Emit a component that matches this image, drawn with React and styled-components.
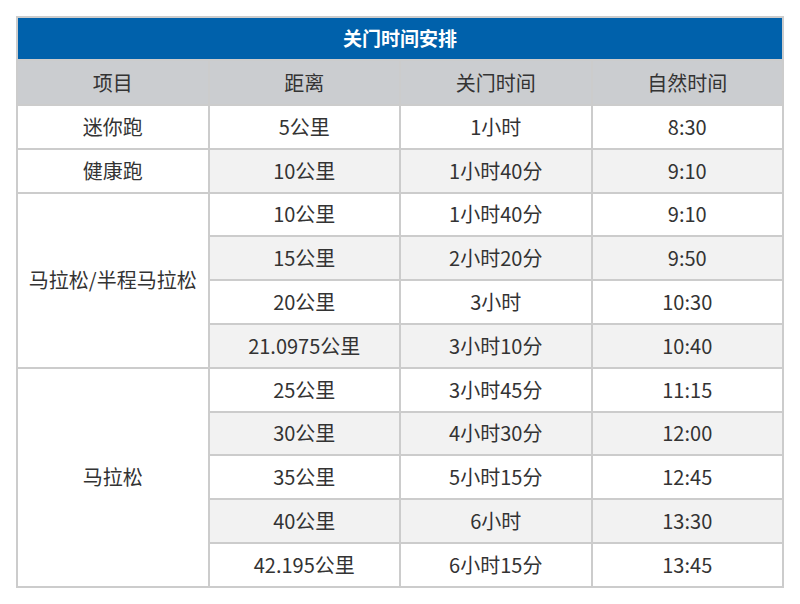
import React from 'react';
import styled, { createGlobalStyle } from 'styled-components';

const GlobalStyle = createGlobalStyle`
  html, body {
    margin: 0;
    padding: 0;
    background: #ffffff;
  }
  body {
    font-family: "Noto Sans CJK SC", "Liberation Sans", sans-serif;
    color: #333333;
  }
`;

const Page = styled.div`
  width: 800px;
  height: 604px;
  padding: 16px;
  box-sizing: border-box;
`;

const Table = styled.table`
  width: 768px;
  border-collapse: collapse;
  table-layout: fixed;
  border: 2px solid #cccccc;
  font-size: 20px;
  line-height: 1.2;
`;

const Title = styled.th`
  background: #0061ab;
  color: #ffffff;
  font-weight: 700;
  font-size: 19px;
  height: 41px;
  padding: 0;
  text-align: center;
  border: 2px solid #cccccc;
  border-bottom: none;
`;

const HeadCell = styled.th`
  background: #cbcdd0;
  color: #333333;
  font-weight: 400;
  height: 43px;
  padding: 0;
  text-align: center;
  border: 2px solid #cccccc;
`;

const Row = styled.tr`
  background: ${({ $striped }) => ($striped ? '#f2f2f2' : '#ffffff')};
`;

const Cell = styled.td`
  height: 41.8px;
  padding: 0;
  text-align: center;
  vertical-align: middle;
  border: 2px solid #cccccc;
  background: ${({ $plain }) => ($plain ? '#ffffff' : 'inherit')};
`;

const rows = [
  { event: '迷你跑', span: 1, dist: '5公里', close: '1小时', time: '8:30' },
  { event: '健康跑', span: 1, dist: '10公里', close: '1小时40分', time: '9:10' },
  { event: '马拉松/半程马拉松', span: 4, dist: '10公里', close: '1小时40分', time: '9:10' },
  { dist: '15公里', close: '2小时20分', time: '9:50' },
  { dist: '20公里', close: '3小时', time: '10:30' },
  { dist: '21.0975公里', close: '3小时10分', time: '10:40' },
  { event: '马拉松', span: 5, dist: '25公里', close: '3小时45分', time: '11:15' },
  { dist: '30公里', close: '4小时30分', time: '12:00' },
  { dist: '35公里', close: '5小时15分', time: '12:45' },
  { dist: '40公里', close: '6小时', time: '13:30' },
  { dist: '42.195公里', close: '6小时15分', time: '13:45' },
];

export default function App() {
  return (
    <Page>
      <GlobalStyle />
      <Table>
        <thead>
          <tr>
            <Title colSpan={4}>关门时间安排</Title>
          </tr>
          <tr>
            <HeadCell>项目</HeadCell>
            <HeadCell>距离</HeadCell>
            <HeadCell>关门时间</HeadCell>
            <HeadCell>自然时间</HeadCell>
          </tr>
        </thead>
        <tbody>
          {rows.map((r, i) => (
            <Row key={i} $striped={i % 2 === 1}>
              {r.event && (
                <Cell $plain rowSpan={r.span}>
                  {r.event}
                </Cell>
              )}
              <Cell>{r.dist}</Cell>
              <Cell>{r.close}</Cell>
              <Cell>{r.time}</Cell>
            </Row>
          ))}
        </tbody>
      </Table>
    </Page>
  );
}
